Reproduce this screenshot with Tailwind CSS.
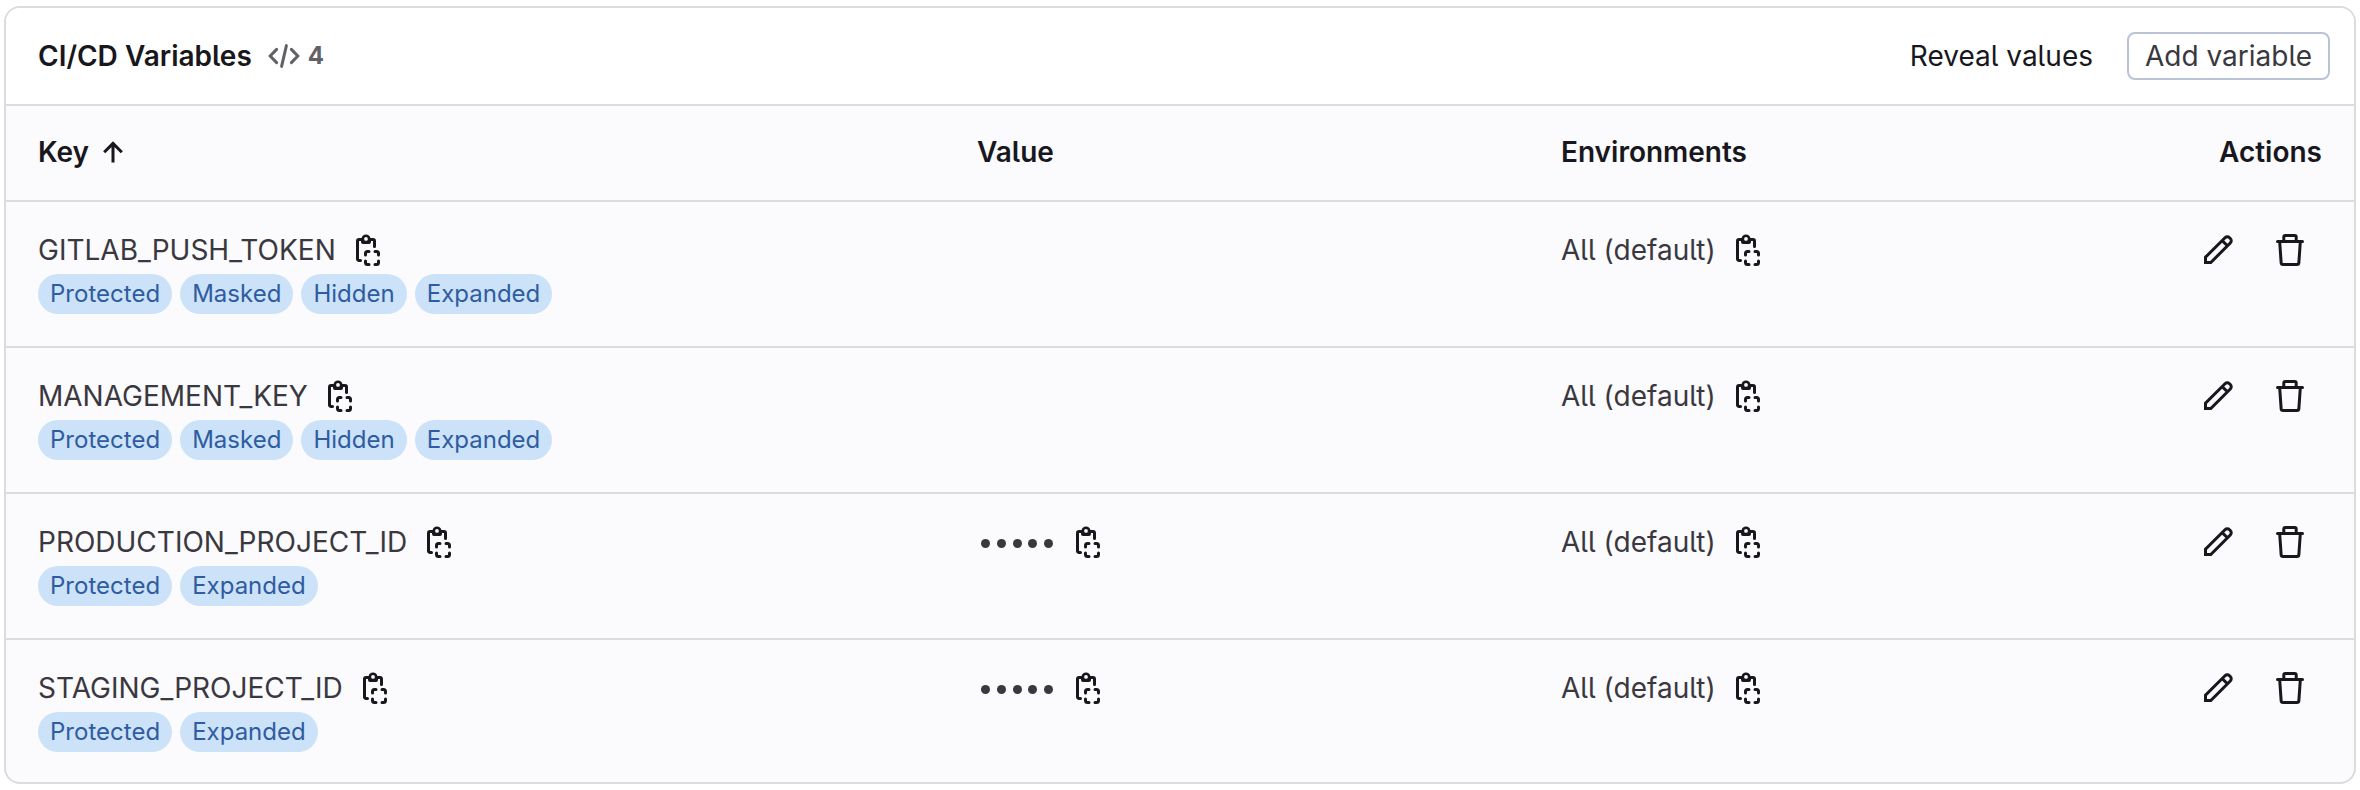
<!DOCTYPE html>
<html lang="en">
<head>
<meta charset="utf-8">
<title>CI/CD Variables</title>
<script src="https://cdn.jsdelivr.net/npm/@tailwindcss/browser@4"></script>
</head>
<body class="h-[790px] overflow-hidden bg-white px-1 pt-1.5 font-['Inter',sans-serif] text-[28px] leading-10 text-[#3a383f] [font-feature-settings:'cv05']">
<svg class="hidden">
  <symbol id="copy" viewBox="0 0 16 16">
    <path d="M4.25 13.25H3.5a.75.75 0 0 1-.75-.75V3.5a.75.75 0 0 1 .75-.75H5M9 2.75h1.5a.75.75 0 0 1 .75.75V6.25" fill="none" stroke="currentColor" stroke-width="1.5" stroke-linecap="round"/>
    <path fill-rule="evenodd" fill="currentColor" d="M4.5 2H4.8a2.25 2.25 0 0 1 4.4 0h.3v2a1 1 0 0 1-1 1h-3a1 1 0 0 1-1-1V2ZM7 1.5a.95.95 0 1 0 0 1.9.95.95 0 0 0 0-1.9Z"/>
    <path d="M6.75 10.5v-.75a1 1 0 0 1 1-1h.75M11.5 8.75h.75a1 1 0 0 1 1 1v.75M13.25 13.5v.75a1 1 0 0 1-1 1h-.75M8.5 15.25h-.75a1 1 0 0 1-1-1v-.75" fill="none" stroke="currentColor" stroke-width="1.5" stroke-linecap="round"/>
  </symbol>
  <symbol id="pencil" viewBox="0 0 16 16">
    <path d="M1.75 14.25V11.6L11.5 1.85a1.6 1.6 0 0 1 2.26 0l.39.39a1.6 1.6 0 0 1 0 2.26L4.4 14.25ZM10.1 3.3l2.6 2.6" fill="none" stroke="currentColor" stroke-width="1.5"/>
  </symbol>
  <symbol id="trash" viewBox="0 0 16 16">
    <path d="M1.75 3.8h12.5M4.9 3.5V1.5a.75.75 0 0 1 .75-.75h4.7a.75.75 0 0 1 .75.75v2M2.85 4l.72 10.3a1 1 0 0 0 1 .95h6.86a1 1 0 0 0 1-.95L13.15 4" fill="none" stroke="currentColor" stroke-width="1.5" stroke-linecap="round"/>
  </symbol>
</svg>

<main class="flex h-[778px] flex-col overflow-hidden rounded-2xl border-2 border-[#dcdcde] bg-[#fbfafd]">
  <header class="flex h-[98px] shrink-0 items-center border-b-2 border-[#dcdcde] bg-white pr-6 pl-8">
    <h2 class="font-[630] text-[#18171d]">CI/CD Variables</h2>
    <svg class="ml-4 size-8 text-[#626168]" viewBox="0 0 16 16" fill="none" stroke="currentColor" stroke-width="1.5" stroke-linecap="round"><path d="M9.2 2.8 6.8 13.2M4.3 4.7 1.1 8l3.2 3.3M11.7 4.7 14.9 8l-3.2 3.3"/></svg>
    <span class="ml-2 text-2xl leading-10 font-bold text-[#626168]">4</span>
    <button class="ml-auto text-[#18171d]">Reveal values</button>
    <button class="ml-[34px] h-12 w-[203px] rounded-lg border-2 border-[#b9c3d6] bg-white leading-none">Add variable</button>
  </header>

  <div class="grid h-24 shrink-0 grid-cols-[939px_584px_1fr_auto] items-center border-b-2 border-[#dcdcde] pr-8 pb-0.5 pl-8 font-[630] text-[#18171d]">
    <div class="flex items-center">Key
      <svg class="ml-2 size-8" viewBox="0 0 16 16" fill="none" stroke="currentColor" stroke-width="1.5"><path d="M8 13.3V4M3.6 8.1 8 3.7l4.4 4.4"/></svg>
    </div>
    <div>Value</div>
    <div>Environments</div>
    <div>Actions</div>
  </div>
  <div id="rows"></div>
</main>

<script>
const copy = '<svg class="ml-4 size-8 text-[#18171d]"><use href="#copy"/></svg>';
const dots = '<div class="flex h-10 items-center"><div class="mt-[3px] ml-1 flex gap-[6.75px]">' +
  '<i class="size-[9px] rounded-full bg-[#3a383f]"></i>'.repeat(5) + '</div>' +
  '<svg class="ml-[19px] size-8 text-[#18171d]"><use href="#copy"/></svg></div>';
const rows = [
  ['GITLAB_PUSH_TOKEN', ['Protected', 'Masked', 'Hidden', 'Expanded'], false],
  ['MANAGEMENT_KEY', ['Protected', 'Masked', 'Hidden', 'Expanded'], false],
  ['PRODUCTION_PROJECT_ID', ['Protected', 'Expanded'], true],
  ['STAGING_PROJECT_ID', ['Protected', 'Expanded'], true],
];
document.getElementById('rows').innerHTML = rows.map(([key, tags, value]) => `
  <div class="grid h-[146px] grid-cols-[939px_584px_1fr_auto] border-b-2 border-[#dcdcde] pt-7 pr-12 pl-8 last:border-b-0">
    <div>
      <div class="flex h-10 items-center">${key}${copy}</div>
      <div class="mt-1 flex gap-2">${tags.map(t => `<span class="h-10 rounded-full bg-[#cbe2f9] px-3 text-2xl leading-10 tracking-[0.015px] text-[#2f5ca0]">${t}</span>`).join('')}</div>
    </div>
    <div>${value ? dots : ''}</div>
    <div class="flex h-10 items-center">All (default)${copy}</div>
    <div class="flex h-10 items-center gap-10 text-[#18171d]">
      <svg class="size-8"><use href="#pencil"/></svg>
      <svg class="size-8"><use href="#trash"/></svg>
    </div>
  </div>`).join('');
</script>
</body>
</html>
